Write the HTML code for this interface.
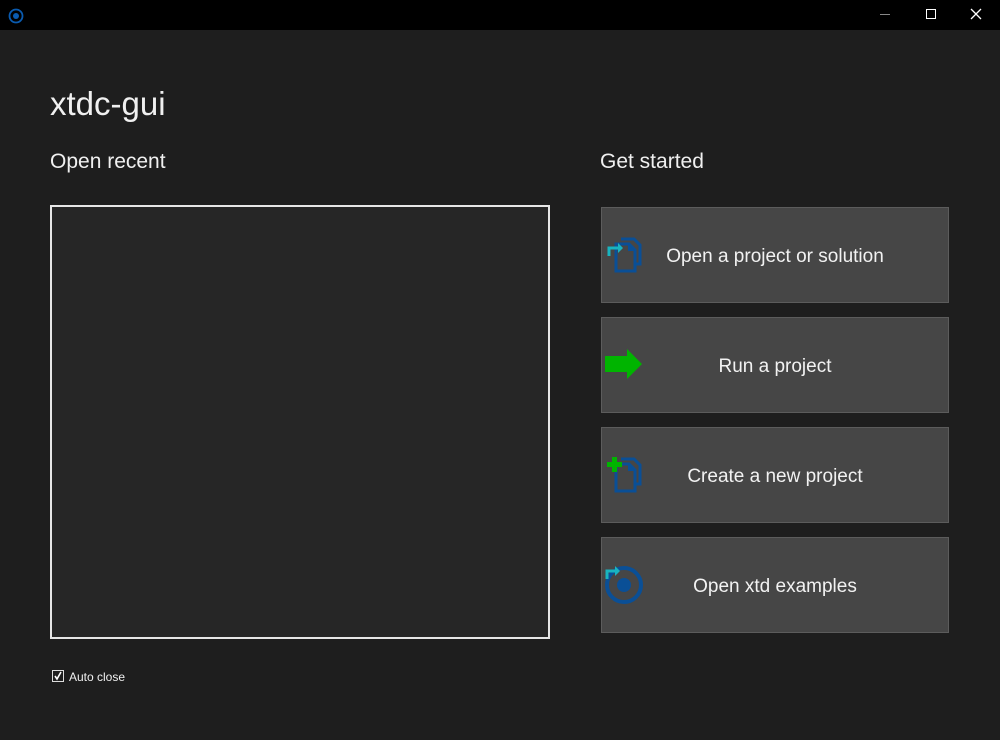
<!DOCTYPE html>
<html><head><style>
body{margin:0;width:1000px;height:740px;background:#1e1e1e;font-family:"Liberation Sans",sans-serif;color:#f0f0f0;position:relative;overflow:hidden}
.tb{position:absolute;left:0;top:0;width:1000px;height:30px;background:#000}
.abs{position:absolute}
.btn{position:absolute;left:601px;background:#464646;border:1px solid #5c5c5c;box-sizing:border-box;width:348px;height:96px}
.btn span{position:absolute;left:0;right:0;top:2px;line-height:94px;text-align:center;font-size:19px;color:#f2f2f2}
svg{position:absolute}
</style></head><body>
<div class="tb">
<svg style="left:7px;top:7px" width="18" height="18"><circle cx="9" cy="9" r="6.5" fill="none" stroke="#0a5bb0" stroke-width="1.8"/><circle cx="9" cy="9" r="3" fill="#0a5bb0"/></svg>
<div class="abs" style="left:880px;top:14px;width:10px;height:1px;background:#888"></div>
<div class="abs" style="left:926px;top:9px;width:8px;height:8px;border:1px solid #fff"></div>
<svg style="left:970px;top:8px" width="12" height="12"><path d="M1 1L11 11M11 1L1 11" stroke="#fff" stroke-width="1.3"/></svg>
</div>
<div class="abs" style="left:50px;top:85px;font-size:33px">xtdc-gui</div>
<div class="abs" style="left:50px;top:150px;font-size:21px">Open recent</div>
<div class="abs" style="left:600px;top:150px;font-size:21px">Get started</div>
<div class="abs" style="left:50px;top:205px;width:496px;height:430px;border:2px solid #e6e6e6;background:#262626"></div>
<div class="abs" style="left:52px;top:670px;width:12px;height:12px;border:1px solid #ddd;box-sizing:border-box"></div>
<svg style="left:52px;top:670px" width="12" height="12"><path d="M3 6L5 9L9 2" stroke="#fff" stroke-width="1.6" fill="none"/></svg>
<div class="abs" style="left:69px;top:670px;font-size:12px">Auto close</div>

<div class="btn" style="top:207px"><span>Open a project or solution</span></div>
<div class="btn" style="top:317px"><span>Run a project</span></div>
<div class="btn" style="top:427px"><span>Create a new project</span></div>
<div class="btn" style="top:537px"><span>Open xtd examples</span></div>

<svg style="left:600px;top:230px" width="50" height="50">
<path d="M21 9H34L40 15V34H36" fill="none" stroke="#0a4f96" stroke-width="3"/>
<path d="M16 14H29L35 20V41H16Z" fill="none" stroke="#0a4f96" stroke-width="3"/>
<path d="M28 14V21H35" fill="#0a4f96"/>
<path d="M9 26V18H19" fill="none" stroke="#18b4c0" stroke-width="3"/><path d="M18 13L23 18L18 23Z" fill="#18b4c0"/>
</svg>
<svg style="left:600px;top:340px" width="50" height="50">
<path d="M5 16H27V9L42 24L27 39V32H5Z" fill="#00b400"/>
</svg>
<svg style="left:600px;top:450px" width="50" height="50">
<path d="M21 9H34L40 15V34H36" fill="none" stroke="#0a4f96" stroke-width="3"/>
<path d="M16 14H29L35 20V41H16Z" fill="none" stroke="#0a4f96" stroke-width="3"/>
<path d="M28 14V21H35" fill="#0a4f96"/>
<path d="M7 12H12V7H17V12H22V17H17V22H12V17H7Z" fill="#00b400"/>
</svg>
<svg style="left:600px;top:560px" width="50" height="50">
<circle cx="24" cy="25" r="17" fill="none" stroke="#0a4f96" stroke-width="4"/>
<circle cx="24" cy="25" r="7" fill="#0a4f96"/>
<path d="M7 19V11H16" fill="none" stroke="#18b4c0" stroke-width="3"/><path d="M15 6L20 11L15 16Z" fill="#18b4c0"/>
</svg>
</body></html>
